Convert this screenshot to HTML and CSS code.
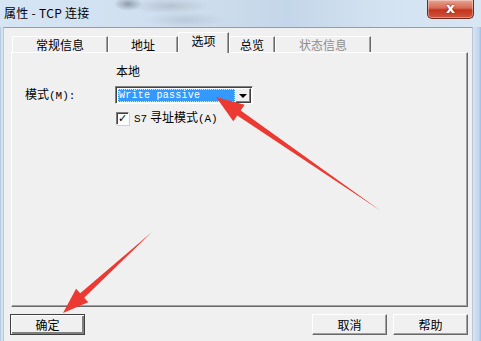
FILE: index.html
```html
<!DOCTYPE html>
<html>
<head>
<meta charset="utf-8">
<link rel="stylesheet" href="styles.css">
</head>
<body>
<div class="window">
  <div class="titlebar">
    <span class="title">属性 - TCP 连接</span>
    <div class="close"><span>x</span></div>
  </div>
  <div class="frame">
    <div class="edge-left"></div>
    <div class="client">
      <div class="tabs">
        <div class="tab t1">常规信息</div>
        <div class="tab t2">地址</div>
        <div class="tab t3 selected">选项</div>
        <div class="tab t4">总览</div>
        <div class="tab t5 disabled">状态信息</div>
      </div>
      <div class="panel">
        <div class="form">
          <div class="cell"></div>
          <div class="cell heading">本地</div>
          <div class="cell label">模式<span class="mono">(M):</span></div>
          <div class="cell">
            <div class="combo">
              <div class="combo-value">Write passive</div>
              <div class="combo-btn"><span class="tri"></span></div>
            </div>
          </div>
          <div class="cell"></div>
          <div class="cell check-row">
            <span class="checkbox">✓</span>
            <span class="check-label"><span class="mono">S7</span> 寻址模式<span class="mono">(A)</span></span>
          </div>
        </div>
      </div>
      <div class="buttons">
        <button class="btn default">确定</button>
        <div class="spacer"></div>
        <button class="btn">取消</button>
        <button class="btn">帮助</button>
      </div>
    </div>
    <div class="edge-right"></div>
  </div>
  <svg class="arrows" width="481" height="341" viewBox="0 0 481 341">
    <polygon points="216,97 244.7,104.8 240.7,110.5 381,211 237.3,115.5 233.3,121.2" fill="#ec3a32" />
    <polygon points="63,313 76.1,288.8 80.2,293.3 152,232 84.2,297.7 88.3,302.2" fill="#ec3a32" />
  </svg>
</div>
</body>
</html>
```

FILE: styles.css
```css
* { box-sizing: border-box; }
html, body {
  margin: 0;
  padding: 0;
  width: 481px;
  height: 341px;
  overflow: hidden;
  background: #d4e3f2;
  font-family: "Noto Sans CJK SC", "Noto Sans", sans-serif;
}
.window {
  position: relative;
  width: 481px;
  height: 341px;
}
.titlebar {
  height: 27px;
  display: flex;
  align-items: center;
  justify-content: space-between;
  background:
    radial-gradient(ellipse 14px 7px at 128px 4px, rgba(90,100,115,0.55), rgba(90,100,115,0) 100%),
    radial-gradient(ellipse 40px 8px at 170px 6px, rgba(150,160,175,0.45), rgba(150,160,175,0) 100%),
    radial-gradient(ellipse 40px 8px at 185px 20px, rgba(150,165,180,0.35), rgba(150,165,180,0) 100%),
    linear-gradient(90deg, #d5e5f4 0%, #cfdeee 40%, #c4d6e9 60%, #d4e3f1 80%, #d8e6f4 100%);
  position: relative;
}
.title {
  font-size: 12px;
  color: #000;
  padding-left: 4px;
  margin-top: -3px;
  letter-spacing: 0.3px;
}
.close {
  width: 47px;
  height: 19px;
  margin-right: 7px;
  align-self: flex-start;
  border: 1px solid #6b2a22;
  border-top: none;
  border-radius: 0 0 5px 5px;
  background: linear-gradient(180deg, #e8a493 0%, #d66a55 45%, #c3341c 55%, #d0563f 100%);
  display: flex;
  align-items: center;
  justify-content: center;
  box-shadow: inset 0 0 0 1px rgba(255,255,255,0.35);
}
.close span {
  color: #fff;
  font-family: "DejaVu Sans", sans-serif;
  font-weight: bold;
  font-size: 14px;
  line-height: 14px;
  margin-top: -2px;
  text-shadow: 0 0 2px #6b1a10;
}
.frame {
  display: flex;
  height: 314px;
}
.edge-left {
  width: 3px;
  background: linear-gradient(90deg, #9fb7d1 0px, #cfe0f1 1px, #d6e5f4 3px);
}
.edge-right {
  width: 8px;
  background: linear-gradient(90deg, #d6e5f4 0px, #bfd5ec 6px, #9fbde0 8px);
}
.client {
  flex: 1;
  background: #f0f0f0;
  border-top: 1px solid #8a9fb6;
  border-left: 1px solid #b9c8d8;
  border-right: 1px solid #b9c8d8;
  display: flex;
  flex-direction: column;
}
.tabs {
  display: flex;
  align-items: flex-end;
  height: 24px;
  padding-left: 8px;
  position: relative;
  z-index: 1;
}
.tab {
  height: 16px;
  font-size: 12px;
  line-height: 16px;
  text-align: center;
  color: #000;
  border-top: 1px solid #fff;
  border-left: 1px solid #fff;
  border-right: 1px solid #696969;
  box-shadow: inset -1px 0 0 #a0a0a0;
  background: #f0f0f0;
}
.t1 { width: 96px; }
.t2 { width: 70px; }
.t3 { width: 51px; }
.t4 { width: 46px; }
.t5 { width: 96px; }
.tab.selected {
  height: 21px;
  margin-bottom: -1px;
  line-height: 16px;
  padding-bottom: 4px;
}
.tab.disabled { color: #8d8d8d; }
.panel {
  margin-left: 7px;
  width: 457px;
  height: 255px;
  border-top: 1px solid #fff;
  border-left: 1px solid #fff;
  border-right: 1px solid #696969;
  border-bottom: 1px solid #696969;
  box-shadow: inset -1px -1px 0 #a0a0a0;
  padding: 10px 0 0 13px;
}
.form {
  display: grid;
  grid-template-columns: 90px 160px;
  grid-template-rows: 16px 18px 14px;
  row-gap: 7px;
  align-items: center;
}
.cell { font-size: 12px; color: #000; }
.heading { line-height: 16px; padding-left: 1px; }
.label { line-height: 16px; }
.mono {
  font-family: "Liberation Mono", "DejaVu Sans Mono", monospace;
  font-size: 11px;
}
.combo {
  width: 138px;
  height: 18px;
  border-top: 1px solid #808080;
  border-left: 1px solid #808080;
  border-right: 1px solid #fff;
  border-bottom: 1px solid #fff;
  box-shadow: inset 1px 1px 0 #404040;
  background: #fff;
  display: flex;
  padding: 2px 1px 1px 2px;
}
.combo-value {
  flex: 1;
  background: #3399ff;
  color: #fff;
  font-family: "Liberation Mono", "DejaVu Sans Mono", monospace;
  font-size: 10px;
  letter-spacing: 0.25px;
  line-height: 13px;
  padding-left: 1px;
  outline: 1px dotted #cfe4ff;
  outline-offset: -1px;
}
.combo-btn {
  width: 16px;
  margin-top: -1px;
  margin-bottom: -1px;
  background: #f0f0f0;
  border-top: 1px solid #fff;
  border-left: 1px solid #fff;
  border-right: 1px solid #404040;
  border-bottom: 1px solid #404040;
  box-shadow: inset -1px -1px 0 #808080;
  display: flex;
  align-items: center;
  justify-content: center;
}
.tri {
  width: 0;
  height: 0;
  border-left: 4px solid transparent;
  border-right: 4px solid transparent;
  border-top: 4px solid #000;
}
.check-row {
  display: flex;
  align-items: center;
  gap: 5px;
  padding-left: 1px;
}
.checkbox {
  width: 13px;
  height: 13px;
  background: #fff;
  border-top: 1px solid #808080;
  border-left: 1px solid #808080;
  border-right: 1px solid #fff;
  border-bottom: 1px solid #fff;
  box-shadow: inset 1px 1px 0 #404040, 1px 1px 0 #d4d0c8;
  font-family: "DejaVu Sans", sans-serif;
  font-size: 11px;
  font-weight: bold;
  line-height: 11px;
  text-align: center;
  color: #000;
}
.check-label { font-size: 12px; line-height: 14px; }
.buttons {
  display: flex;
  padding: 7px 4px 0 6px;
  gap: 6px;
}
.spacer { flex: 1; }
.btn {
  width: 75px;
  height: 21px;
  font-family: "Noto Sans CJK SC", sans-serif;
  font-size: 12px;
  line-height: 17px;
  padding: 0;
  background: #f0f0f0;
  color: #000;
  border-top: 1px solid #fff;
  border-left: 1px solid #fff;
  border-right: 1px solid #696969;
  border-bottom: 1px solid #696969;
  box-shadow: inset -1px -1px 0 #a0a0a0;
}
.btn.default {
  border: 1px solid #404040;
  box-shadow: inset 1px 1px 0 #fff, inset -2px -2px 0 #808080;
}
.arrows {
  position: absolute;
  left: 0;
  top: 0;
  pointer-events: none;
}
```
